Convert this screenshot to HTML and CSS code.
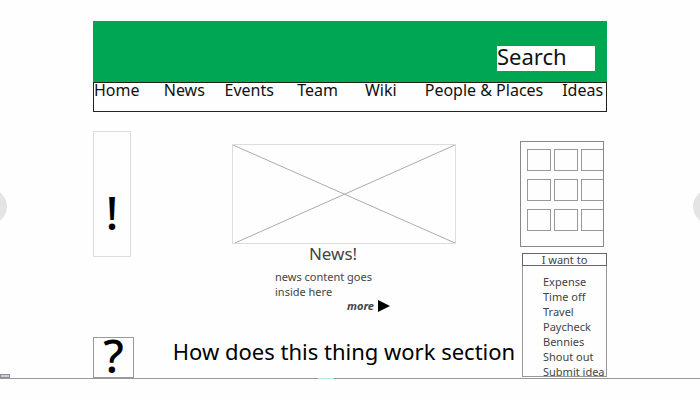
FILE: index.html
```html
<!DOCTYPE html>
<html lang="en">
<head>
<meta charset="utf-8">
<title>Intranet home wireframe</title>
<link rel="stylesheet" href="styles.css">
</head>
<body>
<div class="stage">
  <div class="page">
    <header class="banner">
      <input class="search" type="text" aria-label="Search" placeholder="Search">
    </header>
    <nav class="nav">
      <a href="#">Home</a>
      <a href="#">News</a>
      <a href="#">Events</a>
      <a href="#">Team</a>
      <a href="#">Wiki</a>
      <a href="#">People &amp; Places</a>
      <a href="#">Ideas</a>
    </nav>
    <main class="content">
      <aside class="left">
        <div class="alert">!</div>
        <div class="help">?</div>
      </aside>
      <section class="center">
        <article class="story">
          <svg class="picture" viewBox="0 0 224 100" preserveAspectRatio="none" aria-hidden="true">
            <path d="M0 0L224 100M2 100L224 0"/>
          </svg>
          <h2>News!</h2>
          <p>news content goes<br>inside here</p>
          <a class="more" href="#">more
            <svg viewBox="0 0 12 12" aria-hidden="true"><path d="M0 0L12 6L0 12Z"/></svg>
          </a>
        </article>
        <h1>How does this thing work section</h1>
      </section>
      <aside class="right">
        <div class="tiles">
          <span></span><span></span><span></span>
          <span></span><span></span><span></span>
          <span></span><span></span><span></span>
        </div>
        <div class="menu">
          <h3>I want to</h3>
          <ul>
            <li><a href="#">Expense</a></li>
            <li><a href="#">Time off</a></li>
            <li><a href="#">Travel</a></li>
            <li><a href="#">Paycheck</a></li>
            <li><a href="#">Bennies</a></li>
            <li><a href="#">Shout out</a></li>
            <li><a href="#">Submit idea</a></li>
          </ul>
        </div>
      </aside>
    </main>
  </div>
  <button class="arrow prev" type="button" aria-label="Previous"></button>
  <button class="arrow next" type="button" aria-label="Next"></button>
  <span class="tab"></span>
  <span class="mark"></span>
</div>
</body>
</html>
```
FILE: styles.css
```css
* {
  box-sizing: border-box;
}

body {
  margin: 0;
  background: #fefefe;
  color: #111;
  font-family: "Noto Sans", "Open Sans", sans-serif;
}

a {
  color: inherit;
  text-decoration: none;
}

h1, h2, h3, p, ul {
  margin: 0;
  padding: 0;
  font-weight: 400;
}

.stage {
  position: relative;
  padding: 21px 93px 0;
  border-bottom: 1px solid #999;
  overflow-x: clip;
}

.banner {
  display: flex;
  justify-content: flex-end;
  padding: 25px 12px 11px;
  background: #00a651;
}

.search {
  width: 98px;
  height: 25px;
  padding: 0 0 6px;
  border: 0;
  background: #fff;
  color: #111;
  font: 22px/18px "Noto Sans", "Open Sans", sans-serif;
}

.search::placeholder {
  color: #111;
  opacity: 1;
}

.nav {
  display: grid;
  grid-template-columns: 70fr 61fr 73fr 68fr 60fr 138fr 44fr;
  height: 30px;
  border: 1px solid #222;
  font-size: 16px;
  line-height: 15px;
  white-space: nowrap;
}

.content {
  display: grid;
  grid-template-columns: 75px 1fr 87px;
  padding-top: 19px;
}

.left {
  display: flex;
  flex-direction: column;
  justify-content: space-between;
}

.alert {
  width: 38px;
  height: 126px;
  padding-top: 50px;
  border: 1px solid #ddd;
  color: #000;
  font-size: 46px;
  font-weight: 500;
  line-height: 60px;
  text-align: center;
}

.help {
  width: 41px;
  height: 41px;
  border: 1px solid #999;
  color: #000;
  font-size: 46px;
  font-weight: 500;
  line-height: 35px;
  text-align: center;
}

.center {
  display: flex;
  flex-direction: column;
  align-items: center;
  justify-content: space-between;
  padding: 13px 0 12px;
}

.story {
  display: flex;
  flex-direction: column;
  width: 224px;
  color: #444;
}

.picture {
  width: 100%;
  height: 100px;
  border: 1px solid #ddd;
  fill: none;
  stroke: #aaa;
}

.story h2 {
  padding-right: 22px;
  font-size: 17px;
  line-height: 19px;
  text-align: center;
}

.story p {
  padding: 6px 0 0 43px;
  font-size: 11px;
  line-height: 15px;
}

.more {
  display: flex;
  align-items: center;
  gap: 4px;
  padding-left: 115px;
  font-size: 11px;
  font-style: italic;
  font-weight: 700;
  line-height: 14px;
}

.more svg {
  width: 12px;
  height: 12px;
  fill: #000;
}

.center h1 {
  color: #000;
  font-size: 22px;
  line-height: 30px;
  white-space: nowrap;
}

.right {
  padding: 10px 0 1px;
  color: #444;
}

.tiles {
  display: grid;
  grid-template-columns: repeat(3, 24px);
  grid-auto-rows: 22px;
  gap: 8px 3px;
  width: 84px;
  height: 106px;
  overflow: hidden;
  padding: 7px 6px;
  border: 1px solid #888;
}

.tiles span {
  border: 1px solid #999;
}

.menu {
  margin: 6px 0 0 2px;
  border: 1px solid #999;
  font-size: 11px;
}

.menu h3 {
  margin: -1px;
  border: 1px solid #666;
  font-size: 11px;
  line-height: 11px;
  text-align: center;
}

.menu ul {
  height: 111px;
  padding: 9px 0 0 20px;
  list-style: none;
  line-height: 15px;
  white-space: nowrap;
}

.arrow {
  position: absolute;
  top: 189px;
  width: 35px;
  height: 35px;
  padding: 0;
  border: 0;
  border-radius: 50%;
  background: #e4e4e4;
}

.prev {
  left: -28px;
}

.next {
  right: -28px;
}

.tab {
  position: absolute;
  bottom: 0;
  left: 0;
  width: 10px;
  height: 4px;
  border: 1px solid #8a8f9b;
  background: #ccd;
}

.mark {
  position: absolute;
  bottom: -1px;
  left: 318px;
  width: 16px;
  height: 1px;
  background: #b5ebc5;
}
```
